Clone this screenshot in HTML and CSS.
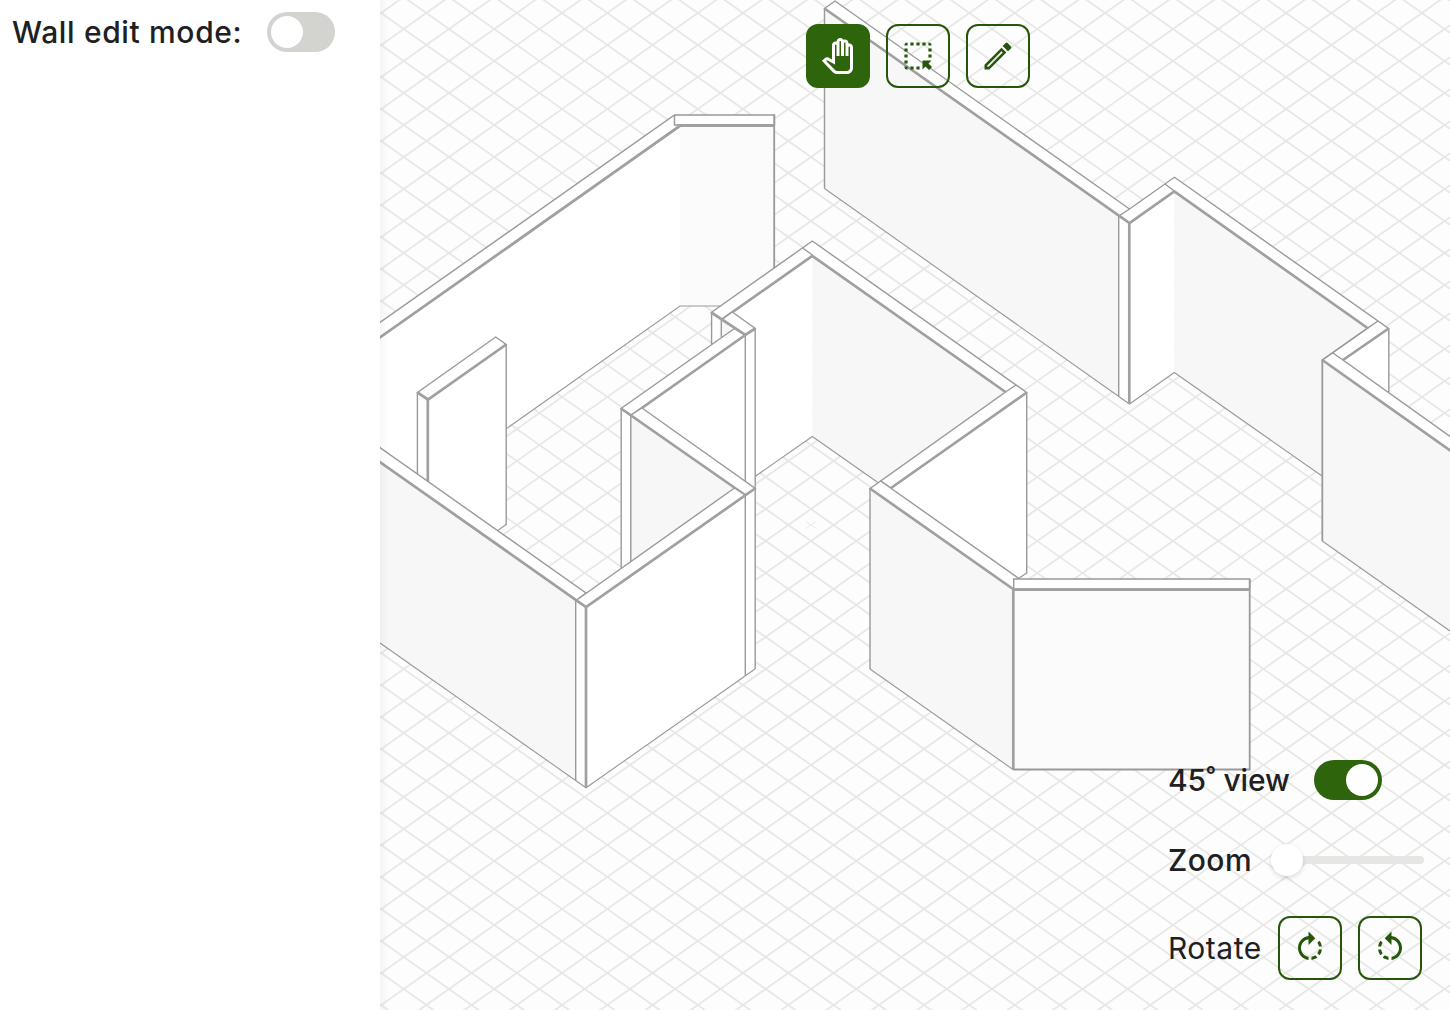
FILE: index.html
```html
<!DOCTYPE html>
<html lang="en">
<head>
<meta charset="utf-8">
<title>Floor plan editor</title>
<link rel="stylesheet" href="styles.css">
</head>
<body>
<div class="app">
  <aside class="sidebar">
    <span class="label label-edit">Wall edit mode:</span>
    <span class="switch" role="switch" aria-checked="false"></span>
  </aside>
  <main class="stage">
    <svg class="scene" viewBox="380 0 1070 1010" aria-hidden="true">
      <!-- floor grid: one pair of lines, repeated until it fills the floor -->
      <defs>
        <path id="down1" class="grid-line" d="M380-755.74L1450 .87"/>
        <g id="down4"><use href="#down1"/><use href="#down1" y="32"/><use href="#down1" y="64"/><use href="#down1" y="96"/></g>
        <g id="down16"><use href="#down4"/><use href="#down4" y="128"/><use href="#down4" y="256"/><use href="#down4" y="384"/></g>
        <path id="up1" class="grid-line" d="M380 13.74L1450-742.87"/>
        <g id="up4"><use href="#up1"/><use href="#up1" y="32"/><use href="#up1" y="64"/><use href="#up1" y="96"/></g>
        <g id="up16"><use href="#up4"/><use href="#up4" y="128"/><use href="#up4" y="256"/><use href="#up4" y="384"/></g>
      </defs>
      <use href="#down16"/><use href="#down16" y="512"/><use href="#down16" y="1024"/><use href="#down16" y="1536"/>
      <use href="#up16"/><use href="#up16" y="512"/><use href="#up16" y="1024"/><use href="#up16" y="1536"/>
      <path class="mark" d="M805.5 521.5l11 7M805.5 528.5l11-7"/>

      <!-- north-west wall -->
      <path class="face" d="M380 337L680 126V306L380 518Z"/>
      <path class="face soft" d="M680 126H774V306H680Z"/>
      <path class="base" d="M380 518L680 306H774"/>
      <path class="top" d="M370 329.5L674.5 115H774.5V125H680L370 344.5Z"/>
      <path class="edge" d="M674.5 115V125H774.5"/>
      <path class="edge heavy" d="M774.2 115V290"/>
      <path class="rim" d="M370 344.5L680 126"/>
      <path class="rim" d="M680 125.6H774.5"/>

      <!-- free-standing wall -->
      <path class="face" d="M417.4 392.5L428 399.5L506.2 344.5V525L428 580L417.4 572Z"/>
      <path class="base" d="M506.2 524.5L490 536"/>
      <path class="edge" d="M417.4 392.5V572M506.2 344.5V525"/>
      <path class="rim" d="M427.8 399.5V580"/>
      <path class="top" d="M417.4 392.5L495.7 337L506.2 344.5L428 399.5Z"/>
      <path class="rim" d="M417.4 392.5L428 399.5L506.2 344.5"/>

      <!-- north-east walls -->
      <path class="face shade" d="M824.5 8.5L1119 216V396.5L824.5 188.5Z"/>
      <path class="face" d="M1119 216L1129.5 223L1174.3 191V372L1129.5 404L1119 396.5Z"/>
      <path class="face shade" d="M1174.3 191L1368 328L1322 360V476.5L1174.3 372.5Z"/>
      <path class="face" d="M1388.6 328.5L1343 360L1388.6 392Z"/>
      <path class="face shade" d="M1322.3 360L1460 457.5V638L1322.3 541Z"/>
      <path class="base" d="M824.5 188.5L1129.5 404L1174.3 372.5L1322 476M1322.3 541L1460 638"/>
      <path class="top" d="M824.5 8.5L835 1L1129.5 209L1174.5 177.3L1388.6 328.5L1343 360L1460 443.5V457.5L1322.3 360L1367.5 328L1174.3 191.5L1129.5 223Z"/>
      <path class="edge" d="M1129.5 209L1119 216M1165 184L1174.3 191M1322.3 360L1378 321M1333 353L1343 360M1367.5 328L1378 321M824.5 8.5V188.5M1118.7 216V396.5M1388.8 328.5V392"/>
      <path class="rim" d="M824.5 8.5L1129.5 223L1174.3 191.5L1367.5 328M1129.3 223V404M1388.6 328.5L1343 360M1322.3 360L1460 457.5"/>
      <path class="edge heavy" d="M1322.3 360V541"/>

      <!-- central room -->
      <path class="face" d="M711.4 312.5L812.3 256V436.5L755 476V520L721.5 338L711.4 344Z"/>
      <path class="face shade" d="M721.5 320L745 335L721.5 338Z"/>
      <path class="face shade" d="M812.3 256L1005.5 392L870 488L880 483.5L812.3 436.5Z"/>
      <path class="base" d="M755 476.5L812.3 436.5L880 484"/>
      <path class="face" d="M1026.7 392.5L891 488L1018.5 578L1026.7 573Z"/>
      <path class="edge" d="M1026.7 392.5V573L1018.5 578.5M711.6 312V344M721.3 319V337"/>
      <path class="top" d="M711.3 312.5L812.3 241L1026.7 392.5L891 488L880.7 481L1005.5 392L812.3 256L722 319.5Z"/>
      <path class="edge" d="M802.7 248L812.3 255M1005.5 392L1016 385"/>
      <path class="rim" d="M722 319.5L812.3 256L1005.5 392M1026.7 392.5L891 488"/>

      <!-- south-east wall -->
      <path class="face shade" d="M870 488.5L1013 589V769.5L870 669Z"/>
      <path class="base" d="M870 669L1013 769.5"/>
      <path class="edge" d="M870 488.5V669"/>
      <path class="top" d="M870 488.5L880.7 481L1019 578.6L1013 589Z"/>
      <path class="face soft" d="M1013.5 589H1249.7V769.5H1013.5Z"/>
      <path class="top" d="M1013.7 579H1249.7V589H1013.7Z"/>
      <path class="edge heavy" d="M1249.7 579V769.5H1013"/>
      <path class="rim" d="M870 488.5L1013 589M1013 589.6H1249.7"/>
      <path class="rim" d="M1013.3 589V769.5"/>

      <!-- inner partition -->
      <path class="face" d="M631 415L745.3 335L755.3 328.5V488.5L745 495Z"/>
      <path class="face" d="M621 408.5L631 415V580H621Z"/>
      <path class="face shade" d="M631 415L745 495L631 580Z"/>
      <path class="edge" d="M621.2 408.5V580M630.8 415V580M745.3 335V482M755.2 328.5V489"/>
      <path class="top" d="M722 319.5L732.3 312L755.3 328.5L745.3 335Z"/>
      <path class="top" d="M621 408.5L734.5 328.5L745.3 335L631 415Z"/>
      <path class="top" d="M631 415L642 408L755.3 488.5L745 495Z"/>
      <path class="rim" d="M711.3 312.5L745.3 335L755.3 328.5M745.3 335L642 408M621 408.5L745 495"/>

      <!-- south-west walls -->
      <path class="face shade" d="M370 455L576 600.5V780.5L370 636Z"/>
      <path class="face" d="M576 600.5L586 607L755 488.5V669L586 787.5L576 780.5Z"/>
      <path class="base" d="M370 636L586 787.8L755 669"/>
      <path class="edge" d="M575.7 600.5V780.5M745.3 495V675.5M755.2 488.5V669"/>
      <path class="rim" d="M586 607V787"/>
      <path class="top" d="M370 440.5L586 593L576 600.5L370 455Z"/>
      <path class="top" d="M576 600.5L734.5 488L745 495L755.3 488.5L586 607Z"/>
      <path class="rim" d="M370 455L586 607L755 488.5"/>
    </svg>

    <nav class="toolbar">
      <button class="tool active" aria-label="Pan">
        <svg viewBox="0 0 24 24"><path d="M18 24h-6.55c-1.08 0-2.14-.45-2.89-1.23l-7.3-7.61 2.07-1.83c.62-.55 1.53-.66 2.26-.27L8 14.34V4.79c0-1.38 1.12-2.5 2.5-2.5.17 0 .34.02.51.05.09-1.3 1.17-2.33 2.49-2.33.86 0 1.61.43 2.06 1.09.29-.12.61-.18.94-.18 1.38 0 2.5 1.12 2.5 2.5v.28c.16-.03.33-.05.5-.05 1.38 0 2.5 1.12 2.5 2.5V20c0 2.21-1.79 4-4 4zM4.14 15.28l5.86 6.1c.38.39.9.62 1.44.62H18c1.1 0 2-.9 2-2V6.15c0-.28-.22-.5-.5-.5s-.5.22-.5.5V12h-2V3.42c0-.28-.22-.5-.5-.5s-.5.22-.5.5V12h-2V2.51c0-.28-.22-.5-.5-.5s-.5.22-.5.5V12h-2V4.79c0-.28-.22-.5-.5-.5s-.5.23-.5.5v12.87l-5.35-2.83-.51.45z"/></svg>
      </button>
      <button class="tool" aria-label="Select">
        <svg viewBox="0 0 36 36"><path d="M10.4 4.4h3.2v3.2h-3.2zM16.4 4.4h3.2v3.2h-3.2zM22.4 4.4h3.2v3.2h-3.2zM28.4 4.4a3.2 3.2 0 0 1 3.2 3.2h-3.2zM4.4 7.6a3.2 3.2 0 0 1 3.2-3.2v3.2zM4.4 10.4h3.2v3.2h-3.2zM4.4 16.4h3.2v3.2h-3.2zM4.4 22.4h3.2v3.2h-3.2zM28.4 10.4h3.2v3.2h-3.2zM28.4 16.4h3.2v3.2h-3.2zM4.4 28.4h3.2v3.2a3.2 3.2 0 0 1-3.2-3.2zM10.4 28.4h3.2v3.2h-3.2zM16.4 28.4h3.2v3.2h-3.2zM22.5 22.5H31.5L28.5 25.5 32 29 29 32 25.500 28.500 22.500 31.500Z"/></svg>
      </button>
      <button class="tool" aria-label="Draw">
        <svg viewBox="0 0 36 36"><path fill-rule="evenodd" d="M21.5 9.7L26.3 14.5L9.300 31.500H4.500V26.700ZM21.500 13.200L7.300 27.400V28.700H8.600L22.800 14.500ZM25.600 5.100Q26.600 4.100 27.600 5.100L30.900 8.400Q31.900 9.400 30.900 10.400L28 13.300L22.700 8Z"/></svg>
      </button>
    </nav>

    <section class="view-panel">
      <div class="row">
        <span class="label label-view">45˚ view</span>
        <span class="switch on" role="switch" aria-checked="true"></span>
      </div>
      <div class="row">
        <span class="label label-zoom">Zoom</span>
        <span class="slider"><span class="thumb"></span><span class="track"></span></span>
      </div>
      <div class="row row-rotate">
        <span class="label label-rotate">Rotate</span>
        <button class="tool" aria-label="Rotate right">
          <svg viewBox="0 0 24 24"><path d="M15.55 5.55L11 1v3.07C7.06 4.56 4 7.92 4 12s3.05 7.44 7 7.93v-2.02c-2.84-.48-5-2.94-5-5.91s2.16-5.43 5-5.91V10l4.55-4.45zM19.93 11c-.17-1.39-.72-2.73-1.62-3.89l-1.42 1.42c.54.75.88 1.6 1.02 2.47h2.02zM13 17.9v2.02c1.39-.17 2.74-.71 3.9-1.61l-1.44-1.44c-.75.54-1.59.89-2.46 1.03zm3.89-2.42l1.42 1.41c.9-1.16 1.45-2.5 1.62-3.89h-2.02c-.14.87-.48 1.72-1.02 2.48z"/></svg>
        </button>
        <button class="tool" aria-label="Rotate left">
          <svg class="mirror" viewBox="0 0 24 24"><path d="M15.55 5.55L11 1v3.07C7.06 4.56 4 7.92 4 12s3.05 7.44 7 7.93v-2.02c-2.84-.48-5-2.94-5-5.91s2.16-5.43 5-5.91V10l4.55-4.45zM19.93 11c-.17-1.39-.72-2.73-1.62-3.89l-1.42 1.42c.54.75.88 1.6 1.02 2.47h2.02zM13 17.9v2.02c1.39-.17 2.74-.71 3.9-1.61l-1.44-1.44c-.75.54-1.59.89-2.46 1.03zm3.89-2.42l1.42 1.41c.9-1.16 1.45-2.5 1.62-3.89h-2.02c-.14.87-.48 1.72-1.02 2.48z"/></svg>
        </button>
      </div>
    </section>
  </main>
</div>
</body>
</html>
```
FILE: styles.css
```css
* { box-sizing: border-box; }
body {
  margin: 0;
  background: #fff;
  color: #20201e;
  font-family: Inter, "Liberation Sans", sans-serif;
}
.app {
  display: grid;
  grid-template-columns: 380px 1fr;
  width: 1450px;
  height: 1010px;
  overflow: hidden;
}
.sidebar {
  display: flex;
  align-items: flex-start;
  padding: 12px;
  background: #fff;
}
.stage {
  position: relative;
  overflow: hidden;
  background: #fdfdfd;
}
.stage::after {
  content: "";
  position: absolute;
  inset: 0 auto 0 0;
  width: 9px;
  background: linear-gradient(90deg, rgba(0, 0, 0, .035), transparent);
}
.scene { display: block; width: 1070px; height: 1010px; }

.label {
  flex: none;
  font-size: 30px;
  font-weight: 550;
  line-height: 40px;
  white-space: nowrap;
}
.label-edit { width: 255px; letter-spacing: .65px; }
.label-view { width: 146px; letter-spacing: -.1px; }
.label-zoom { width: 102px; letter-spacing: .5px; }
.label-rotate { width: 110px; font-weight: 400; letter-spacing: .5px; }

.switch {
  display: flex;
  flex: none;
  width: 68px;
  height: 40px;
  padding: 4px;
  border-radius: 20px;
  background: #d3d4cf;
}
.switch::before {
  content: "";
  width: 32px;
  height: 32px;
  border-radius: 50%;
  background: #fff;
}
.switch.on { justify-content: flex-end; background: #2d640c; }

.toolbar {
  position: absolute;
  top: 24px;
  left: 426px;
  display: flex;
  gap: 16px;
}
.tool {
  display: grid;
  flex: none;
  place-items: center;
  width: 64px;
  height: 64px;
  padding: 0;
  border: 2px solid #25570a;
  border-radius: 12px;
  background: transparent;
  color: #25570a;
}
.tool.active { border-color: #2d640c; background: #2d640c; color: #fff; }
.tool svg { width: 36px; height: 36px; fill: currentColor; }
.mirror { transform: scaleX(-1); }

.view-panel {
  position: absolute;
  top: 760px;
  left: 788px;
  display: flex;
  flex-direction: column;
  gap: 40px;
}
.row { display: flex; align-items: center; height: 40px; }
.row-rotate { height: 64px; margin-top: -4px; }
.row-rotate .tool + .tool { margin-left: 16px; }
.slider { display: flex; align-items: center; padding-left: 1px; }
.thumb {
  z-index: 1;
  width: 32px;
  height: 32px;
  border-radius: 50%;
  background: #fff;
  box-shadow: 0 2px 5px rgba(0, 0, 0, .14);
}
.track {
  width: 125px;
  height: 8px;
  margin-left: -4px;
  border-radius: 4px;
  background: #e6e6e4;
}

.grid-line { fill: none; stroke: #e7e7e5; stroke-width: 1.8; }
.mark { fill: none; stroke: #efefed; stroke-width: 1.4; }
.face { fill: #fff; }
.face.soft { fill: #fbfbfb; }
.face.shade { fill: #f7f7f7; }
.top { fill: #fff; stroke: #999; stroke-width: 1.4; }
.edge { fill: none; stroke: #999; stroke-width: 1.4; }
.edge.heavy { stroke-width: 1.8; }
.rim { fill: none; stroke: #a0a0a0; stroke-width: 2.7; }
.base { fill: none; stroke: #999; stroke-width: 1.1; }
```
